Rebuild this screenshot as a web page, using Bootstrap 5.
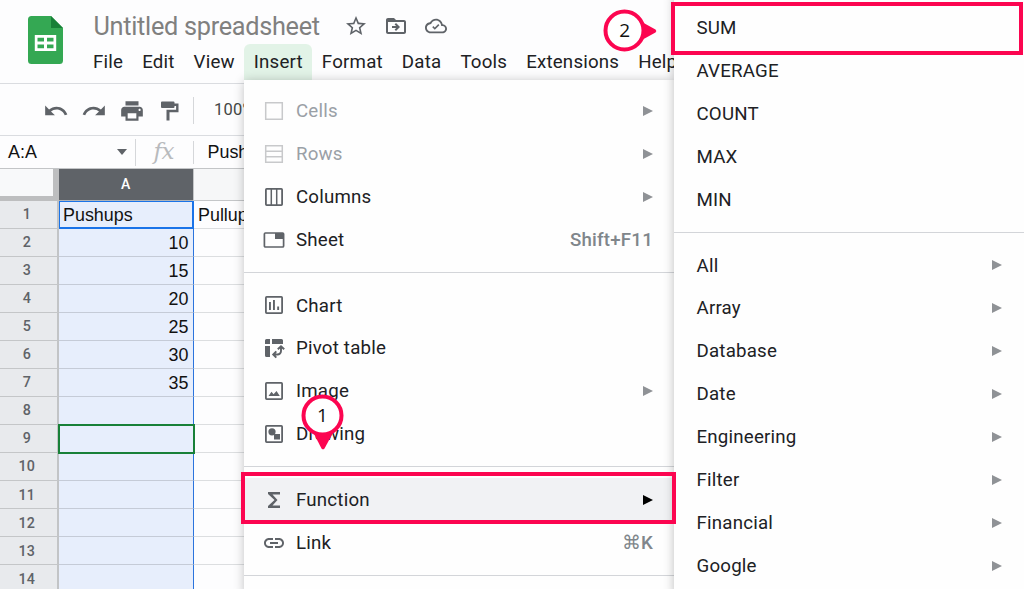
<!DOCTYPE html>
<html lang="en">
<head>
<meta charset="utf-8">
<meta name="viewport" content="width=device-width, initial-scale=1">
<title>Untitled spreadsheet</title>
<link href="https://cdn.jsdelivr.net/npm/bootstrap@5.3.0/dist/css/bootstrap.min.css" rel="stylesheet">
<style>
body{width:1024px;height:589px;overflow:hidden;background:#fdfdfe;color:#202124;font-family:Roboto,sans-serif;font-size:18.7px;letter-spacing:.2px;line-height:1}
svg{display:block;flex:none}
.ico{color:#5f6368;fill:currentColor}
.app-head{height:84px;border-bottom:1.5px solid #dadce0}
.logo{margin:16px 0 0 28px}
.head-main{position:absolute;left:83px;top:0}
.doc-title{font-family:Roboto,sans-serif;font-size:25.3px;color:#80807f;letter-spacing:-.3px;width:243px;height:54px;padding-left:10.5px}
.menus{height:36px}
.menus span{height:36px;padding:0 9px 0 10px;display:flex;align-items:center}
.menus .on{background:#e2f3e7;border-radius:6px 6px 0 0}
.tools{height:52px;padding-top:2px;border-bottom:1px solid #dadce0}
.vline{width:1px;height:27px;background:#d5d7da}
.fbar{height:33px;border-bottom:1px solid #c3c5c7;font-family:"Liberation Sans",sans-serif;font-size:17.9px;letter-spacing:0;color:#111}
.fbar span{padding-top:1px}
.fx{font-family:"DejaVu Serif",serif;font-style:italic;font-size:23px;color:#b8babd;letter-spacing:-.5px}
.sheet{font-family:"Liberation Sans",sans-serif;font-size:17.9px;letter-spacing:0;color:#111}
.sheet .line{height:28.07px}
.rh{width:58.5px;background:#e8eaed;border-right:2px solid #c2c4c6;border-bottom:1.5px solid #c4c6c8;color:#5f6368;font-family:Roboto,sans-serif;font-size:14.3px;font-weight:500;padding-right:3px}
.ca{width:135px;background:#e7eefc;border-right:1.5px solid #2b74dd;border-bottom:1px solid #c5cbd7;padding:3px 4px 0 4.5px}
.cb{width:60px;border-bottom:1px solid #dcdee0;padding:3px 0 0 4.5px}
.colhead{height:31.5px}
.corner{width:58.5px;background:#f8f9fa;border-right:6px solid #bdbebf;border-bottom:5px solid #bdbebf}
.ha{width:134.5px;background:#5f6368;color:#fff;font:500 14px Roboto,sans-serif;border-bottom:1px solid #b0b3b7}
.hb{width:60px;background:#f6f7f8;border-left:1px solid #c4c6c8;border-bottom:1px solid #c4c6c8}
.ca.first{border:1.5px solid #1a73e8;border-right-width:2px;border-bottom-width:2px;padding-left:3.5px}
.ca.cursor{outline:2px solid #188038;outline-offset:-1.5px;position:relative;border-right-color:#188038}
.menu-pop{background:#fefefe;letter-spacing:.2px}
.insert-menu{left:244px;top:79.5px;width:430px;height:515px;padding-top:10px;box-shadow:0 1px 10px rgba(0,0,0,.24)}
.fn-menu{left:674px;top:-6px;width:356px;height:602px;padding-top:13px;box-shadow:0 1px 10px rgba(0,0,0,.26)}
.mi{height:42.9px;padding:1.2px 21px 0 17.5px}
.mi svg.ico{width:24px;height:24px;margin:-1.2px 10.5px 0 0}
.mi .arr{margin-top:-1px}
.fn-menu .mi{padding:.4px 28px 0 22.5px}
.fn-menu .mi .arr{margin-top:-1px}
.sep{height:22.8px;padding-top:10.8px}
.sep i{display:block;height:1px;background:#d3d5d9}
.off{color:#9aa0a6}
.off svg.ico{color:#c8c9cb}
.arr{width:0;height:0;border-left:10px solid #8f9296;border-top:5px solid transparent;border-bottom:5px solid transparent}
.key{color:#80868b;font-weight:500}
.active-row{background:#f1f2f4}
.active-row .arr{border-left-color:#000}
.hl{border:4.5px solid #fc0550}
.pin{font-family:"Open Sans",sans-serif}
</style>
</head>
<body class="position-relative">
<header class="app-head position-relative">
  <svg class="logo position-absolute" width="35" height="48" viewBox="0 0 35 48"><path fill="#34a853" d="M3.500 0H23l12 12v32.500a3.500 3.500 0 0 1-3.500 3.500h-28A3.500 3.500 0 0 1 0 44.500v-41A3.500 3.500 0 0 1 3.500 0z"/><path fill="#188038" d="M23 0l12 12H23z"/><path fill="#fff" fill-rule="evenodd" d="M6.800 19h21.400v16H6.800zM9.500 21.700v3.800h6.500v-3.800zM19 21.700v3.800h6.500v-3.800zM9.500 28.500v3.800h6.500v-3.800zM19 28.500v3.800h6.500v-3.800z"/></svg>
  <div class="head-main">
    <div class="d-flex" style="height:44px">
      <div class="doc-title d-flex align-items-center text-nowrap">Untitled spreadsheet</div>
      <div class="d-flex align-items-center ico" style="height:52px;padding-left:18px;gap:16px">
        <svg width="24" height="24" viewBox="0 0 24 24" fill="currentColor"><path d="M22 9.240l-7.190-.62L12 2 9.190 8.630 2 9.240l5.460 4.730L5.820 21 12 17.270 18.180 21l-1.630-7.030L22 9.240zM12 15.400l-3.760 2.270 1-4.280-3.320-2.880 4.380-.38L12 6.100l1.710 4.040 4.380.38-3.320 2.880 1 4.280L12 15.400z"/></svg>
        <svg width="24" height="24" viewBox="0 0 24 24" fill="currentColor"><path d="M20 6h-8l-2-2H4c-1.100 0-2 .9-2 2v12c0 1.100.9 2 2 2h16c1.100 0 2-.9 2-2V8c0-1.100-.9-2-2-2zm0 12H4V8h16v10zm-8-1l4-4-4-4-1.400 1.400L12.200 12H8v2h4.200l-1.600 1.600z"/></svg>
        <svg width="22" height="22" style="margin-left:1px" viewBox="0 0 24 24" fill="currentColor"><path d="M19.350 10.040C18.670 6.590 15.640 4 12 4 9.110 4 6.610 5.640 5.360 8.040 2.350 8.360 0 10.900 0 14c0 3.310 2.690 6 6 6h13c2.760 0 5-2.240 5-5 0-2.640-2.050-4.780-4.650-4.960zM19 18H6c-2.210 0-4-1.790-4-4 0-2.050 1.530-3.760 3.560-3.970l1.070-.11.5-.95C8.080 7.140 9.940 6 12 6c2.620 0 4.880 1.860 5.390 4.430l.3 1.500 1.530.11c1.560.1 2.780 1.410 2.780 2.960 0 1.650-1.350 3-3 3zm-8.300-4.300l-1.600-1.600L7.900 13.300l2.800 2.800 5-5-1.200-1.200z"/></svg>
      </div>
    </div>
    <nav class="menus d-flex text-nowrap"><span>File</span><span>Edit</span><span>View</span><span class="on">Insert</span><span>Format</span><span>Data</span><span>Tools</span><span>Extensions</span><span>Help</span></nav>
  </div>
</header>

<div class="tools d-flex align-items-center">
  <div class="d-flex align-items-center ico" style="padding-left:43px;gap:12px">
    <svg width="26" height="26" viewBox="0 0 24 24" fill="currentColor"><path d="M12.500 8c-2.650 0-5.050.99-6.900 2.600L2 7v9h9l-3.620-3.620c1.390-1.160 3.160-1.880 5.120-1.880 3.540 0 6.550 2.310 7.600 5.500l2.370-.78C21.080 11.030 17.150 8 12.500 8z"/></svg>
    <svg width="26" height="26" viewBox="0 0 24 24" fill="currentColor"><path d="M18.400 10.600C16.550 8.990 14.150 8 11.500 8c-4.650 0-8.580 3.030-9.960 7.220L3.900 16c1.050-3.190 4.050-5.500 7.600-5.500 1.950 0 3.730.72 5.120 1.880L13 16h9V7l-3.600 3.600z"/></svg>
    <svg width="26" height="26" viewBox="0 0 24 24" fill="currentColor"><path d="M19 8H5c-1.660 0-3 1.340-3 3v6h4v4h12v-4h4v-6c0-1.660-1.340-3-3-3zm-3 11H8v-5h8v5zm3-7c-.55 0-1-.45-1-1s.45-1 1-1 1 .45 1 1-.45 1-1 1zm-1-9H6v4h12V3z"/></svg>
    <svg width="26" height="26" viewBox="0 0 26 26" fill="currentColor"><path d="M5 3.500h11.500a1 1 0 0 1 1 1V5.500h4v8.700H12.500V22.500h-3V11.700h9.600V8H17.500V9a1 1 0 0 1-1 1H5a1 1 0 0 1-1-1V4.500a1 1 0 0 1 1-1z"/></svg>
  </div>
  <div class="vline" style="margin:0 20px 0 10px"></div>
  <span style="font-size:16.500px;color:#444746">100%</span>
</div>

<div class="fbar d-flex align-items-center">
  <span style="width:117px;padding-left:8px">A:A</span>
  <svg width="10" height="6" viewBox="0 0 10 6"><path d="M0 0h10L5 6z" fill="#5f6368"/></svg>
  <div class="vline" style="margin-left:8px"></div>
  <span class="fx" style="width:57px;padding:0 0 1px 17.500px">fx</span>
  <div class="vline" style="height:23px"></div>
  <span style="padding-left:13.500px">Pushups</span>
</div>

<main class="sheet">
  <div class="colhead d-flex"><div class="corner"></div><div class="ha d-flex align-items-center justify-content-center">A</div><div class="hb"></div></div>
  <div id="rows"></div>
</main>

<div class="menu-pop insert-menu position-absolute">
  <div class="mi off d-flex align-items-center"><svg class="ico" viewBox="0 0 24 24"><path fill="none" stroke="currentColor" stroke-width="1.500" d="M3.700 3.700h16.600v16.600H3.700z"/></svg>Cells<i class="arr ms-auto"></i></div>
  <div class="mi off d-flex align-items-center"><svg class="ico" viewBox="0 0 24 24"><path fill="none" stroke="currentColor" stroke-width="1.500" d="M3.700 3.700h16.600v16.600H3.700zM4 9.300h16M4 14.700h16"/></svg>Rows<i class="arr ms-auto"></i></div>
  <div class="mi d-flex align-items-center"><svg class="ico" viewBox="0 0 24 24"><rect x="3.900" y="3.900" width="16.200" height="16.200" rx=".8" fill="none" stroke="currentColor" stroke-width="1.800"/><path fill="none" stroke="currentColor" stroke-width="1.500" d="M9.300 4v16M14.700 4v16"/></svg>Columns<i class="arr ms-auto"></i></div>
  <div class="mi d-flex align-items-center"><svg class="ico" viewBox="0 0 24 24"><rect x="2.400" y="5" width="19.200" height="14" rx="1" fill="none" stroke="currentColor" stroke-width="1.700"/><path d="M13 5h8.500v6H13z"/></svg>Sheet<span class="key ms-auto">Shift+F11</span></div>
  <div class="sep"><i></i></div>
  <div class="mi d-flex align-items-center"><svg class="ico" viewBox="0 0 24 24"><rect x="3.900" y="3.900" width="16.200" height="16.200" rx=".8" fill="none" stroke="currentColor" stroke-width="1.800"/><path d="M7 9h1.900v8H7zM11 7h1.900v10H11zM15.200 13.500h1.900V17h-1.900z"/></svg>Chart</div>
  <div class="mi d-flex align-items-center"><svg class="ico" viewBox="0 0 24 24"><path d="M4.500 3H8v5H3V4.500A1.500 1.500 0 0 1 4.500 3zM10 3h9.500A1.500 1.500 0 0 1 21 4.500V8H10zM3 10h5v11H4.500A1.500 1.500 0 0 1 3 19.500z"/><path fill="none" stroke="currentColor" stroke-width="1.900" d="M15.800 13.300l3.200-3.100 3.200 3.100M19 10.500V15a3.500 3.500 0 0 1-3.500 3.500h-4M14.300 15.300l-3.100 3.200 3.100 3.200"/></svg>Pivot table</div>
  <div class="mi d-flex align-items-center"><svg class="ico" viewBox="0 0 24 24"><rect x="3.900" y="3.900" width="16.200" height="16.200" rx=".8" fill="none" stroke="currentColor" stroke-width="1.800"/><path d="M6.500 17l3-4.200 2.100 2.500L14.500 12l3.300 5z"/></svg>Image<i class="arr ms-auto"></i></div>
  <div class="mi d-flex align-items-center"><svg class="ico" viewBox="0 0 24 24"><rect x="3.900" y="3.900" width="16.200" height="16.200" rx=".8" fill="none" stroke="currentColor" stroke-width="1.800"/><circle cx="10" cy="9.800" r="3.600"/><path d="M12 12h6v5.500h-6z"/></svg>Drawing</div>
  <div class="sep"><i></i></div>
  <div class="mi active-row d-flex align-items-center"><svg class="ico" viewBox="0 0 24 24"><path d="M18 4H6v2l6.500 6L6 18v2h12v-2.500h-7.500l5-5.500-5-5.500H18z"/></svg>Function<i class="arr ms-auto"></i></div>
  <div class="mi d-flex align-items-center"><svg class="ico" viewBox="0 0 24 24"><path d="M3.900 12c0-1.710 1.390-3.100 3.100-3.100h4V7H7c-2.760 0-5 2.240-5 5s2.240 5 5 5h4v-1.900H7c-1.710 0-3.100-1.390-3.100-3.100zM8 13h8v-2H8v2zm9-6h-4v1.900h4c1.710 0 3.100 1.390 3.100 3.100s-1.390 3.100-3.100 3.100h-4V17h4c2.760 0 5-2.240 5-5s-2.240-5-5-5z"/></svg>Link<span class="key ms-auto">⌘K</span></div>
  <div class="sep"><i></i></div>
</div>

<div class="menu-pop fn-menu position-absolute">
  <div class="mi d-flex align-items-center">SUM</div>
  <div class="mi d-flex align-items-center">AVERAGE</div>
  <div class="mi d-flex align-items-center">COUNT</div>
  <div class="mi d-flex align-items-center">MAX</div>
  <div class="mi d-flex align-items-center">MIN</div>
  <div class="sep"><i></i></div>
  <div class="mi d-flex align-items-center">All<i class="arr ms-auto"></i></div>
  <div class="mi d-flex align-items-center">Array<i class="arr ms-auto"></i></div>
  <div class="mi d-flex align-items-center">Database<i class="arr ms-auto"></i></div>
  <div class="mi d-flex align-items-center">Date<i class="arr ms-auto"></i></div>
  <div class="mi d-flex align-items-center">Engineering<i class="arr ms-auto"></i></div>
  <div class="mi d-flex align-items-center">Filter<i class="arr ms-auto"></i></div>
  <div class="mi d-flex align-items-center">Financial<i class="arr ms-auto"></i></div>
  <div class="mi d-flex align-items-center">Google<i class="arr ms-auto"></i></div>
</div>

<div class="hl position-absolute" style="left:241px;top:472px;width:435px;height:52px"></div>
<div class="hl position-absolute" style="left:671px;top:2px;width:352px;height:53px"></div>
<svg class="pin position-absolute" style="left:602px;top:8px" width="58" height="45" viewBox="0 0 58 45"><path fill="#fc0550" d="M38 13l15.500 8.500a2 2 0 0 1 0 3L38 33z"/><circle cx="22.500" cy="22.500" r="19" fill="#fff" stroke="#fc0550" stroke-width="4"/><text x="22.800" y="28.500" font-size="19" text-anchor="middle" fill="#111">2</text></svg>
<svg class="pin position-absolute" style="left:300px;top:393px" width="45" height="60" viewBox="0 0 45 60"><path fill="#fc0550" d="M12.500 38l9 17.500a2 2 0 0 0 3 0L34 38z"/><circle cx="22.500" cy="22.500" r="19" fill="#fff" stroke="#fc0550" stroke-width="4"/><text x="22.500" y="28.500" font-size="19" text-anchor="middle" fill="#111">1</text></svg>

<script>
const data = ['Pushups', 10, 15, 20, 25, 30, 35];
let html = '';
for (let n = 1; n <= 14; n++) {
  const v = data[n - 1] ?? '';
  const cls = n === 1 ? 'first' : (n === 9 ? 'cursor justify-content-end' : 'justify-content-end');
  html += `<div class="line d-flex"><div class="rh d-flex align-items-center justify-content-center">${n}</div><div class="ca ${cls} d-flex align-items-center">${v}</div><div class="cb d-flex align-items-center">${n === 1 ? 'Pullups' : ''}</div></div>`;
}
document.getElementById('rows').innerHTML = html;
</script>
<script src="https://cdn.jsdelivr.net/npm/bootstrap@5.3.0/dist/js/bootstrap.bundle.min.js"></script>
</body>
</html>
